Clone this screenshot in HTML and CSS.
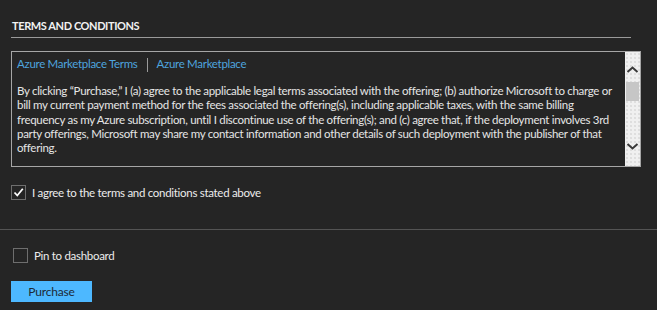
FILE: index.html
```html
<!DOCTYPE html>
<html lang="en">
<head>
  <meta charset="UTF-8" />
  <title>Terms and conditions</title>
  <link rel="stylesheet" href="styles.css">
</head>
<body>

  <div class="secao">
    <h2 class="titulo">TERMS AND CONDITIONS</h2>

    <div class="termos">
      <div class="termos-texto">
        <div class="links">
          <a href="#">Azure Marketplace Terms</a>
          <span class="barra"></span>
          <a href="#">Azure Marketplace</a>
        </div>
        <p>By clicking “Purchase,” I (a) agree to the applicable legal terms associated with the offering; (b) authorize Microsoft to charge or bill my current payment method for the fees associated the offering(s), including applicable taxes, with the same billing frequency as my Azure subscription, until I discontinue use of the offering(s); and (c) agree that, if the deployment involves 3rd party offerings, Microsoft may share my contact information and other details of such deployment with the publisher of that offering.</p>
      </div>
      <div class="rolagem">
        <svg class="seta seta-cima" width="15" height="15" viewBox="0 0 15 15"><path d="M2.5 10 L7.5 5.5 L12.5 10" fill="none" stroke="#3a3a3a" stroke-width="2"/></svg>
        <div class="trilho"><div class="puxador"></div></div>
        <svg class="seta seta-baixo" width="15" height="15" viewBox="0 0 15 15"><path d="M2.5 5 L7.5 9.5 L12.5 5" fill="none" stroke="#3a3a3a" stroke-width="2"/></svg>
      </div>
    </div>

    <label class="opcao opcao-aceite">
      <span class="caixa">
        <svg width="13" height="13" viewBox="0 0 13 13"><path d="M2.5 6.5 L5.3 9.5 L10.8 2.8" fill="none" stroke="#fff" stroke-width="1.8"/></svg>
      </span>
      I agree to the terms and conditions stated above
    </label>
  </div>

  <div class="rodape">
    <label class="opcao opcao-pin">
      <span class="caixa"></span>
      Pin to dashboard
    </label>
    <button class="comprar">Purchase</button>
  </div>

</body>
</html>
```

FILE: styles.css
```css
body {
  margin: 0;
  background: #252525;
  color: #e6e6e6;
  font-family: 'Segoe UI', Lato, sans-serif;
  font-size: 11.5px;
  letter-spacing: -0.3px;
}

.secao {
  padding: 18px 16px 0 11px;
  border-bottom: 1px solid #545454;
  height: 230px;
  box-sizing: border-box;
}

.titulo {
  margin: 0 10px 0 0;
  padding: 0 0 3px 1px;
  font-size: 11px;
  font-weight: 700;
  letter-spacing: -0.4px;
  line-height: 16px;
  color: #f2f2f2;
  border-bottom: 1px solid #9a9a9a;
}

.termos {
  display: flex;
  margin-top: 13px;
  height: 116px;
  border: 1px solid #a6a6a6;
  box-sizing: border-box;
}

.termos-texto {
  flex: 1;
  padding: 4px 5px 0 5px;
  overflow: hidden;
  line-height: 14.3px;
}

.links {
  display: flex;
  align-items: center;
  gap: 9px;
  height: 17px;
}

.links a {
  color: #4ea4df;
  text-decoration: none;
}

.barra {
  width: 1px;
  height: 14px;
  background: #9a9a9a;
}

.termos-texto p {
  margin: 11px 0 0 0;
  color: #e6e6e6;
}

.rolagem {
  width: 15px;
  display: flex;
  flex-direction: column;
  background-color: #f0f0f0;
  background-image: radial-gradient(#c9c9c9 0.6px, transparent 0.8px);
  background-size: 4px 4px;
}

.seta {
  display: block;
}

.seta-cima {
  margin-top: 10px;
}

.seta-baixo {
  margin-bottom: 12px;
}

.trilho {
  flex: 1;
}

.puxador {
  margin: 5px 1px 0 1px;
  height: 19px;
  background: #c6c6c6;
}

.opcao {
  display: flex;
  align-items: center;
  gap: 6px;
  color: #ececec;
}

.opcao-aceite {
  margin-top: 18px;
}

.caixa {
  width: 15px;
  height: 15px;
  border: 1px solid #6e6e6e;
  box-sizing: border-box;
  display: flex;
  align-items: center;
  justify-content: center;
}

.rodape {
  padding: 18px 0 0 11px;
}

.opcao-pin {
  margin-left: 2px;
}

.comprar {
  display: block;
  margin-top: 18px;
  width: 81px;
  height: 21px;
  padding: 0;
  border: 0;
  background: #4db8ff;
  color: #1d2a36;
  font-family: inherit;
  font-size: 12px;
  letter-spacing: -0.2px;
}
```
